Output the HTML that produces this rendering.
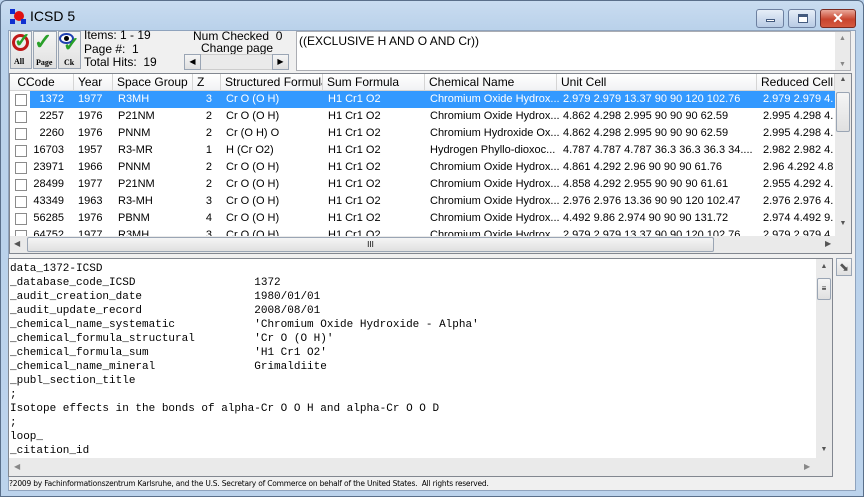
<!DOCTYPE html>
<html><head><meta charset="utf-8"><style>
*{margin:0;padding:0;box-sizing:border-box}
body{width:864px;height:497px;overflow:hidden;background:#bcd3ec;font-family:"Liberation Sans",sans-serif;font-size:11px;color:#000;position:relative}
.a{position:absolute}
#frame{left:0;top:0;width:864px;height:497px;background:linear-gradient(#c9dcf0,#b9d1ea 30px,#bcd3ec);border:1px solid #5a6f8a;border-radius:6px 6px 0 0}
#client{left:8px;top:30px;width:848px;height:461px;background:#f0f0f0;border:1px solid #8fa3bd}
.tb{font-size:12px}
.btn{background:linear-gradient(#f5f5f5,#e0e0e0);border:1px solid #9aa5b4}
.hdr{top:74px;height:17px;background:linear-gradient(#fff,#f1f2f4);border-right:1px solid #d5d5d5;border-bottom:1px solid #d5d5d5;padding-left:4px;line-height:16px;font-size:12px;white-space:nowrap;overflow:hidden}
.row{left:10px;width:825px;height:17px;line-height:17px;font-size:11px;white-space:nowrap}
.row span{position:absolute;top:0;overflow:hidden;white-space:nowrap}
.cb{position:absolute;left:5px;top:3px;width:12px;height:12px;border:1px solid #8b8b8b;background:#fff}
.sel{background:#3399ff;color:#fff}
.mono{font-family:"Liberation Mono",monospace;font-size:11px;line-height:14px;white-space:pre}
.sb{background:#eaeaea}
</style></head><body>
<div id="frame" class="a"></div>
<div class="a" style="left:10px;top:9px;width:16px;height:16px">
<div class="a" style="left:4px;top:2px;width:10px;height:10px;border-radius:50%;background:#e01010"></div>
<div class="a" style="left:0;top:0;width:5px;height:5px;background:#1030d0"></div>
<div class="a" style="left:0;top:10px;width:5px;height:5px;background:#1030d0"></div>
<div class="a" style="left:11px;top:10px;width:5px;height:5px;background:#1030d0"></div>
</div>
<div class="a" style="left:30px;top:8px;font-size:14px;color:#000">ICSD 5</div>
<div class="a" style="left:756px;top:9px;width:28px;height:19px;border:1px solid #6d80a0;border-radius:3px;background:linear-gradient(#e6eef8,#b8cbe4)"><div class="a" style="left:9px;top:9px;width:9px;height:3px;background:#fff;border:1px solid #435a7e"></div></div>
<div class="a" style="left:788px;top:9px;width:28px;height:19px;border:1px solid #6d80a0;border-radius:3px;background:linear-gradient(#e6eef8,#b8cbe4)"><div class="a" style="left:9px;top:4px;width:10px;height:9px;background:#fff;border:1px solid #435a7e;border-top-width:3px"></div></div>
<div class="a" style="left:820px;top:9px;width:36px;height:19px;border:1px solid #7a2a20;border-radius:3px;background:linear-gradient(#e9a89a,#c8452e 55%,#d55a40);color:#fff;font-weight:bold;font-size:14px;text-align:center;line-height:17px">✕</div>

<div id="client" class="a"></div>
<div class="a btn" style="left:10px;top:31px;width:22px;height:38px"></div>
<div class="a" style="left:12px;top:34px;width:17px;height:17px;border:3px solid #c01818;border-radius:50%"></div>
<div class="a" style="left:14px;top:28px;font-size:20px;color:#2aa02a;font-weight:bold">✓</div>
<div class="a" style="left:14px;top:57px;font-size:8px;font-weight:bold;font-family:'Liberation Serif',serif">All</div>
<div class="a btn" style="left:33px;top:31px;width:24px;height:38px"></div>
<div class="a" style="left:34px;top:29px;font-size:22px;color:#2aa02a;font-weight:bold">✓</div>
<div class="a" style="left:36px;top:58px;font-size:8px;font-weight:bold;font-family:'Liberation Serif',serif">Page</div>
<div class="a btn" style="left:58px;top:31px;width:23px;height:38px"></div>
<div class="a" style="left:59px;top:33px;width:15px;height:11px;border-radius:50%;background:#fff;border:2px solid #1f3fb0"></div>
<div class="a" style="left:64px;top:36px;width:5px;height:5px;border-radius:50%;background:#000"></div>
<div class="a" style="left:63px;top:32px;font-size:20px;color:#2aa02a;font-weight:bold">✓</div>
<div class="a" style="left:64px;top:58px;font-size:8px;font-weight:bold;font-family:'Liberation Serif',serif">Ck</div>
<div class="a tb" style="left:84px;top:29px;line-height:13.5px">Items: 1 - 19<br>Page #:&nbsp; 1<br>Total Hits:&nbsp; 19</div>
<div class="a tb" style="left:193px;top:29px">Num Checked&nbsp; 0</div>
<div class="a tb" style="left:201px;top:41px">Change page</div>
<div class="a sb" style="left:184px;top:54px;width:104px;height:16px;border:1px solid #ccc"></div>
<div class="a btn" style="left:184px;top:54px;width:17px;height:16px;font-size:8px;text-align:center;line-height:14px">◀</div>
<div class="a btn" style="left:272px;top:54px;width:17px;height:16px;font-size:8px;text-align:center;line-height:14px">▶</div>
<div class="a" style="left:296px;top:31px;width:555px;height:40px;background:#fff;border:1px solid #abadb3"></div>
<div class="a tb" style="left:299px;top:34px">((EXCLUSIVE H AND O AND Cr))</div>
<div class="a sb" style="left:835px;top:32px;width:15px;height:38px;font-size:7px;color:#888;text-align:center;line-height:13px">▲<br><br>▼</div>

<div class="a" style="left:9px;top:73px;width:843px;height:181px;background:#fff;border:1px solid #828790"></div>
<div class="a hdr" style="left:10px;width:64px">&nbsp;CCode</div>
<div class="a hdr" style="left:74px;width:39px">Year</div>
<div class="a hdr" style="left:113px;width:80px">Space Group</div>
<div class="a hdr" style="left:193px;width:28px">Z</div>
<div class="a hdr" style="left:221px;width:102px">Structured Formula</div>
<div class="a hdr" style="left:323px;width:102px">Sum Formula</div>
<div class="a hdr" style="left:425px;width:132px">Chemical Name</div>
<div class="a hdr" style="left:557px;width:200px">Unit Cell</div>
<div class="a hdr" style="left:757px;width:78px">Reduced Cell</div>

<div class="a" style="left:10px;top:91px;width:825px;height:145px;overflow:hidden">
<div class="a row" style="left:0;top:0"><div class="a sel" style="left:20px;top:0;width:805px;height:17px"></div><div class="cb"></div>
<span style="left:20px;width:34px;text-align:right;color:#fff">1372</span><span style="left:68px;color:#fff">1977</span><span style="left:108px;color:#fff">R3MH</span><span style="left:184px;width:18px;text-align:right;color:#fff">3</span><span style="left:216px;color:#fff">Cr O (O H)</span><span style="left:318px;color:#fff">H1 Cr1 O2</span><span style="left:420px;width:130px;color:#fff">Chromium Oxide Hydrox...</span><span style="left:553px;color:#fff">2.979 2.979 13.37 90 90 120 102.76</span><span style="left:753px;width:72px;color:#fff">2.979 2.979 4.</span></div>
</div>
<div class="a" style="left:10px;top:108px;width:825px;height:128px;overflow:hidden">
<div class="a row" style="left:0;top:0"><div class="cb"></div><span style="left:20px;width:34px;text-align:right">2257</span><span style="left:68px">1976</span><span style="left:108px">P21NM</span><span style="left:184px;width:18px;text-align:right">2</span><span style="left:216px">Cr O (O H)</span><span style="left:318px">H1 Cr1 O2</span><span style="left:420px;width:130px">Chromium Oxide Hydrox...</span><span style="left:553px">4.862 4.298 2.995 90 90 90 62.59</span><span style="left:753px;width:72px">2.995 4.298 4.</span></div>
<div class="a row" style="left:0;top:17px"><div class="cb"></div><span style="left:20px;width:34px;text-align:right">2260</span><span style="left:68px">1976</span><span style="left:108px">PNNM</span><span style="left:184px;width:18px;text-align:right">2</span><span style="left:216px">Cr (O H) O</span><span style="left:318px">H1 Cr1 O2</span><span style="left:420px;width:130px">Chromium Hydroxide Ox...</span><span style="left:553px">4.862 4.298 2.995 90 90 90 62.59</span><span style="left:753px;width:72px">2.995 4.298 4.</span></div>
<div class="a row" style="left:0;top:34px"><div class="cb"></div><span style="left:20px;width:34px;text-align:right">16703</span><span style="left:68px">1957</span><span style="left:108px">R3-MR</span><span style="left:184px;width:18px;text-align:right">1</span><span style="left:216px">H (Cr O2)</span><span style="left:318px">H1 Cr1 O2</span><span style="left:420px;width:130px">Hydrogen Phyllo-dioxoc...</span><span style="left:553px">4.787 4.787 4.787 36.3 36.3 36.3 34....</span><span style="left:753px;width:72px">2.982 2.982 4.</span></div>
<div class="a row" style="left:0;top:51px"><div class="cb"></div><span style="left:20px;width:34px;text-align:right">23971</span><span style="left:68px">1966</span><span style="left:108px">PNNM</span><span style="left:184px;width:18px;text-align:right">2</span><span style="left:216px">Cr O (O H)</span><span style="left:318px">H1 Cr1 O2</span><span style="left:420px;width:130px">Chromium Oxide Hydrox...</span><span style="left:553px">4.861 4.292 2.96 90 90 90 61.76</span><span style="left:753px;width:72px">2.96 4.292 4.8</span></div>
<div class="a row" style="left:0;top:68px"><div class="cb"></div><span style="left:20px;width:34px;text-align:right">28499</span><span style="left:68px">1977</span><span style="left:108px">P21NM</span><span style="left:184px;width:18px;text-align:right">2</span><span style="left:216px">Cr O (O H)</span><span style="left:318px">H1 Cr1 O2</span><span style="left:420px;width:130px">Chromium Oxide Hydrox...</span><span style="left:553px">4.858 4.292 2.955 90 90 90 61.61</span><span style="left:753px;width:72px">2.955 4.292 4.</span></div>
<div class="a row" style="left:0;top:85px"><div class="cb"></div><span style="left:20px;width:34px;text-align:right">43349</span><span style="left:68px">1963</span><span style="left:108px">R3-MH</span><span style="left:184px;width:18px;text-align:right">3</span><span style="left:216px">Cr O (O H)</span><span style="left:318px">H1 Cr1 O2</span><span style="left:420px;width:130px">Chromium Oxide Hydrox...</span><span style="left:553px">2.976 2.976 13.36 90 90 120 102.47</span><span style="left:753px;width:72px">2.976 2.976 4.</span></div>
<div class="a row" style="left:0;top:102px"><div class="cb"></div><span style="left:20px;width:34px;text-align:right">56285</span><span style="left:68px">1976</span><span style="left:108px">PBNM</span><span style="left:184px;width:18px;text-align:right">4</span><span style="left:216px">Cr O (O H)</span><span style="left:318px">H1 Cr1 O2</span><span style="left:420px;width:130px">Chromium Oxide Hydrox...</span><span style="left:553px">4.492 9.86 2.974 90 90 90 131.72</span><span style="left:753px;width:72px">2.974 4.492 9.</span></div>
<div class="a row" style="left:0;top:119px"><div class="cb"></div><span style="left:20px;width:34px;text-align:right">64752</span><span style="left:68px">1977</span><span style="left:108px">R3MH</span><span style="left:184px;width:18px;text-align:right">3</span><span style="left:216px">Cr O (O H)</span><span style="left:318px">H1 Cr1 O2</span><span style="left:420px;width:130px">Chromium Oxide Hydrox...</span><span style="left:553px">2.979 2.979 13.37 90 90 120 102.76</span><span style="left:753px;width:72px">2.979 2.979 4.</span></div>
</div>
<div class="a sb" style="left:835px;top:74px;width:16px;height:162px"></div>
<div class="a" style="left:835px;top:76px;width:16px;font-size:7px;color:#555;text-align:center">▲</div>
<div class="a btn" style="left:836px;top:92px;width:14px;height:40px;border-radius:2px"></div>
<div class="a" style="left:835px;top:220px;width:16px;font-size:7px;color:#555;text-align:center">▼</div>
<div class="a sb" style="left:10px;top:236px;width:841px;height:17px"></div>
<div class="a" style="left:14px;top:239px;font-size:8px;color:#555">◀</div>
<div class="a btn" style="left:27px;top:237px;width:687px;height:15px;border-radius:2px;text-align:center;font-size:8px;line-height:13px">III</div>
<div class="a" style="left:825px;top:239px;font-size:8px;color:#555">▶</div>

<div class="a" style="left:8px;top:258px;width:825px;height:219px;background:#fff;border:1px solid #828790"></div>
<div class="a mono" style="left:10px;top:262px">data_1372-ICSD
_database_code_ICSD                  1372
_audit_creation_date                 1980/01/01
_audit_update_record                 2008/08/01
_chemical_name_systematic            'Chromium Oxide Hydroxide - Alpha'
_chemical_formula_structural         'Cr O (O H)'
_chemical_formula_sum                'H1 Cr1 O2'
_chemical_name_mineral               Grimaldiite
_publ_section_title
;
Isotope effects in the bonds of alpha-Cr O O H and alpha-Cr O O D
;
loop_
_citation_id</div>
<div class="a sb" style="left:816px;top:259px;width:16px;height:199px"></div>
<div class="a" style="left:816px;top:263px;width:16px;font-size:7px;color:#555;text-align:center">▲</div>
<div class="a btn" style="left:817px;top:278px;width:14px;height:22px;border-radius:2px;font-size:8px;text-align:center;line-height:20px">≡</div>
<div class="a" style="left:816px;top:446px;width:16px;font-size:7px;color:#555;text-align:center">▼</div>
<div class="a sb" style="left:9px;top:458px;width:823px;height:18px"></div>
<div class="a" style="left:14px;top:462px;font-size:8px;color:#888">◀</div>
<div class="a" style="left:804px;top:462px;font-size:8px;color:#888">▶</div>
<div class="a btn" style="left:836px;top:258px;width:16px;height:18px"></div>
<div class="a" style="left:839px;top:260px;font-size:12px;color:#555">⬊</div>
<div class="a" style="left:9px;top:479px;font-size:7.5px;font-family:'DejaVu Sans',sans-serif;letter-spacing:-0.2px">?2009 by Fachinformationszentrum Karlsruhe, and the U.S. Secretary of Commerce on behalf of the United States.&nbsp; All rights reserved.</div>
</body></html>
